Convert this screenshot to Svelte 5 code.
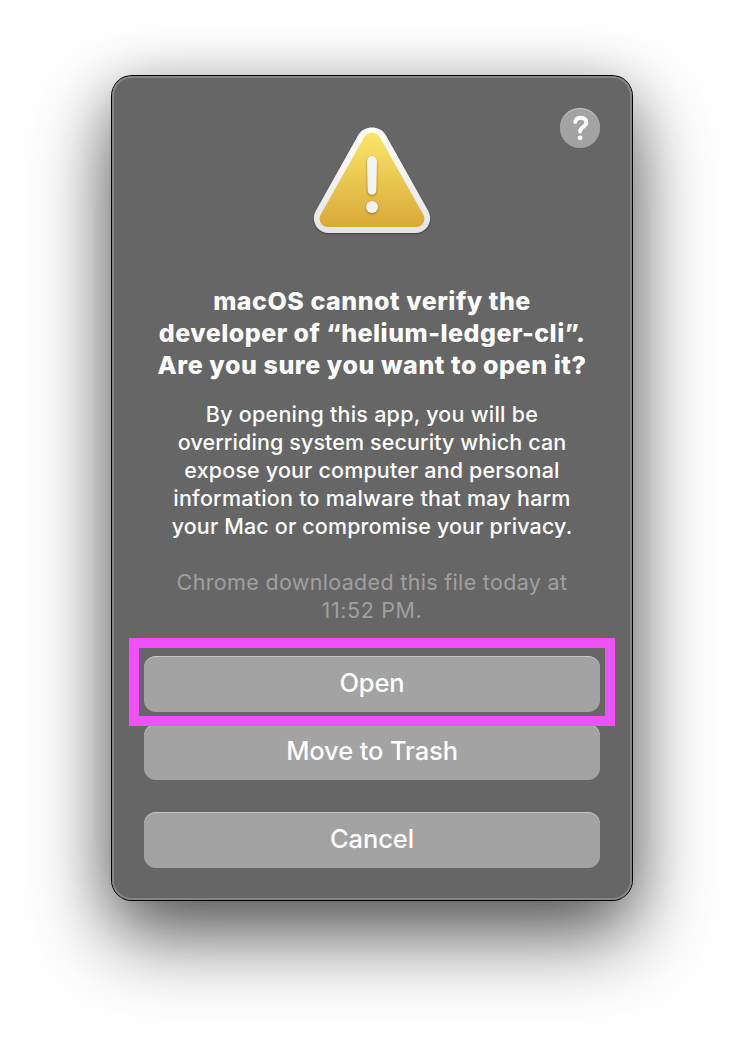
<script>
  const title = [
    { text: 'macOS cannot verify the', spacing: 0.53 },
    { text: 'developer of “helium-ledger-cli”.', spacing: 0.48 },
    { text: 'Are you sure you want to open it?', spacing: 0.58 }
  ];
  const body = [
    { text: 'By opening this app, you will be', spacing: 0.24 },
    { text: 'overriding system security which can', spacing: 0.1 },
    { text: 'expose your computer and personal', spacing: 0.15 },
    { text: 'information to malware that may harm', spacing: 0.22 },
    { text: 'your Mac or compromise your privacy.', spacing: 0.14 }
  ];
  const origin = [
    { text: 'Chrome downloaded this file today at', spacing: 0.33 },
    { text: '11:52 PM.', spacing: 0.62 }
  ];
</script>

{#snippet lines(items)}
  {#each items as line}
    <span class="line" style="letter-spacing: {line.spacing}px">{line.text}</span>
  {/each}
{/snippet}

<main>
  <section class="dialog" role="alertdialog" aria-labelledby="title">
    <header>
      <svg class="warning" width="128" height="120" viewBox="308 121 128 120" aria-hidden="true">
        <defs>
          <linearGradient id="rim" x1="0" y1="0" x2="0" y2="1">
            <stop offset="0" stop-color="#fff" />
            <stop offset="1" stop-color="#e4e4e6" />
          </linearGradient>
          <linearGradient id="gold" x1="0" y1="0" x2="0" y2="1">
            <stop offset="0" stop-color="#fae667" />
            <stop offset="1" stop-color="#d9a938" />
          </linearGradient>
        </defs>
        <path class="rim" fill="url(#rim)" d="M358.500 134.500C364.500 125 379.500 125 385.500 134.500L428.300 211C433.500 221 427 233 415.500 233H328.500C317 233 310.500 221 315.700 211Z" />
        <path fill="url(#gold)" d="M364 137.500C367.500 131.300 376.500 131.300 380 137.500L423.300 214.500C426.500 220.500 422.500 227 416 227H328C321.500 227 317.500 220.500 320.700 214.500Z" />
        <g class="mark" fill="#f3f3f4">
          <path d="M367 161a5 5 0 0 1 10 0L376.300 190.500a4.300 4.300 0 0 1-8.600 0Z" />
          <circle cx="372" cy="207" r="6" />
        </g>
      </svg>
      <button class="help" aria-label="Help">
        <svg width="40" height="40" viewBox="0 0 40 40" aria-hidden="true">
          <path d="M15.200 14C15.800 10.900 17.800 9.800 20.600 9.800C24.100 9.800 26.400 11.500 26.400 14.300C26.400 16.500 25.100 17.700 23.300 18.800C21 20.200 20.100 21.100 20.100 23.600" fill="none" stroke="#fff" stroke-width="3.900" stroke-linecap="round" stroke-linejoin="round" />
          <circle cx="20.100" cy="29.800" r="2.400" fill="#fff" />
        </svg>
      </button>
    </header>
    <h1 id="title">{@render lines(title)}</h1>
    <p>{@render lines(body)}</p>
    <p class="origin">{@render lines(origin)}</p>
    <div class="actions">
      <div class="marked"><button class="action">Open</button></div>
      <button class="action">Move to Trash</button>
      <button class="action cancel">Cancel</button>
    </div>
  </section>
</main>

<style>
  :global(body) { background: #fff; }
  main {
    box-sizing: border-box;
    width: 744px;
    height: 1048px;
    padding: 76px 112px 148px;
    overflow: hidden;
    font-family: Inter, "Liberation Sans", sans-serif;
  }
  .dialog {
    box-sizing: border-box;
    height: 824px;
    padding: 32px;
    border-radius: 20px;
    background: #666;
    color: #fff;
    text-align: center;
    box-shadow: inset 0 0 0 2px #858585, 0 0 0 1px #000, 0 36px 82px rgba(0, 0, 0, .62), 0 8px 54px rgba(0, 0, 0, .2);
  }
  header {
    display: grid;
    grid-template-columns: 40px 1fr 40px;
    height: 177px;
  }
  .warning {
    grid-column: 2;
    justify-self: center;
    margin-top: 13px;
    overflow: visible;
  }
  .rim { filter: drop-shadow(0 1px 1px rgba(0, 0, 0, .35)); }
  .mark { filter: drop-shadow(0 1px 1px rgba(100, 70, 0, .6)); }
  button {
    padding: 0;
    border: 0;
    color: inherit;
    font-family: inherit;
    background: #a3a3a3;
    box-shadow: inset 0 1px 0 #c4c4c4;
  }
  .help {
    width: 40px;
    height: 40px;
    border-radius: 50%;
  }
  .help svg { display: block; }
  h1 {
    margin: 0 0 19px;
    font-size: 25px;
    font-weight: 800;
    line-height: 32px;
  }
  p {
    margin: 0 0 28px;
    font-size: 21.5px;
    font-weight: 500;
    line-height: 28px;
  }
  .line { display: block; white-space: nowrap; }
  .origin {
    margin-bottom: 32px;
    color: #a0a0a0;
    font-weight: 400;
  }
  .actions {
    display: flex;
    flex-direction: column;
    gap: 12px;
  }
  .action {
    display: block;
    width: 100%;
    height: 56px;
    flex: none;
    padding-bottom: 3px;
    border-radius: 12px;
    font-size: 25.500px;
    font-weight: 500;
    letter-spacing: -.12px;
  }
  .marked {
    position: relative;
    z-index: 1;
  }
  .marked::after {
    content: "";
    position: absolute;
    inset: -18px -15px -14px;
    border: 10px solid #ec52f8;
  }
  .cancel { margin-top: 20px; }
</style>
